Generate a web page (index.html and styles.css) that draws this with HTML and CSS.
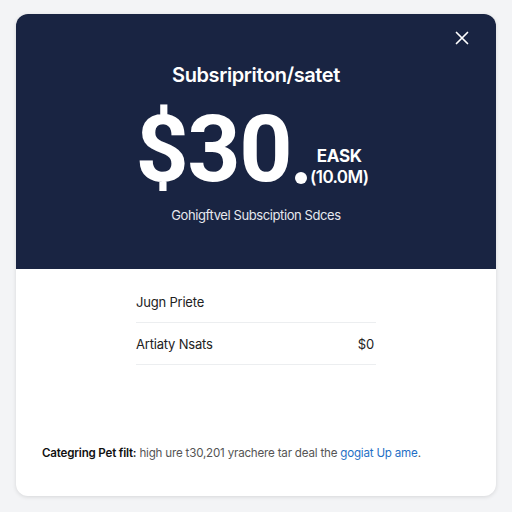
FILE: index.html
```html
<!DOCTYPE html>
<html>
<head>
<meta charset="utf-8">
<link rel="stylesheet" href="styles.css">
</head>
<body>
<div class="card">
  <header class="hero">
    <button class="close" aria-label="Close">
      <svg width="14" height="14" viewBox="0 0 14 14"><path d="M1.5 1.5L12.5 12.5M12.5 1.5L1.5 12.5" stroke="#fff" stroke-width="1.7" stroke-linecap="round"/></svg>
    </button>
    <h1 class="title">Subsripriton/satet</h1>
    <div class="price">
      <span class="amount">$30</span>
      <span class="dot"></span>
      <span class="unit"><span class="ask">EASK</span><span class="paren">(10.0M)</span></span>
    </div>
    <p class="sub">Gohigftvel Subsciption Sdces</p>
  </header>
  <section class="rows">
    <div class="row"><span>Jugn Priete</span></div>
    <div class="row"><span>Artiaty Nsats</span><span>$0</span></div>
  </section>
  <footer class="foot">
    <strong>Categring Pet filt:</strong> high ure t30,201 yrachere tar deal the <a href="#">gogiat Up ame</a>.
  </footer>
</div>
</body>
</html>
```
FILE: styles.css
```css
* { box-sizing: border-box; }
html, body { margin: 0; padding: 0; }
body {
  width: 512px;
  height: 512px;
  background: #f3f4f6;
  font-family: Inter, "Noto Sans", sans-serif;
  padding: 14px 16px 16px;
}
.card {
  width: 480px;
  height: 482px;
  background: #fff;
  border-radius: 12px;
  overflow: hidden;
  box-shadow: 0 1px 4px rgba(0,0,0,0.12);
  display: flex;
  flex-direction: column;
}
.hero {
  position: relative;
  height: 255px;
  background: #192442;
  color: #fff;
  display: flex;
  flex-direction: column;
  align-items: center;
  padding-top: 49px;
}
.close {
  position: absolute;
  top: 17px;
  right: 27px;
  background: none;
  border: 0;
  padding: 0;
  width: 14px;
  height: 14px;
}
.title {
  margin: 0;
  font-size: 20px;
  font-weight: 600;
  letter-spacing: -0.4px;
  line-height: 24px;
}
.price {
  display: flex;
  align-items: flex-end;
  margin-top: 18px;
  height: 90px;
  margin-left: -8px;
}
.amount {
  font-family: Roboto, sans-serif;
  font-size: 93px;
  font-weight: 700;
  letter-spacing: -1.5px;
  line-height: 90px;
}
.dot {
  width: 12px;
  height: 12px;
  border-radius: 50%;
  background: #fff;
  margin: 0 3px 11px 4px;
}
.unit {
  display: flex;
  flex-direction: column;
  align-items: center;
  margin-bottom: 7px;
}
.ask {
  font-size: 17px;
  font-weight: 700;
  line-height: 21px;
  letter-spacing: -0.3px;
}
.paren {
  font-size: 17px;
  font-weight: 600;
  line-height: 21px;
  letter-spacing: -0.6px;
}
.sub {
  margin: 11px 0 0;
  font-size: 13px;
  line-height: 18px;
  color: #e6e8ee;
  letter-spacing: -0.4px;
}
.rows {
  width: 240px;
  margin: 12px auto 0;
}
.row {
  display: flex;
  justify-content: space-between;
  align-items: center;
  height: 42px;
  padding: 0 2px 0 0;
  font-size: 13px;
  color: #222;
  border-bottom: 1px solid #eceef0;
  letter-spacing: -0.2px;
}
.foot {
  margin-top: auto;
  padding: 0 26px 36px;
  font-size: 11.6px;
  color: #555;
  letter-spacing: -0.2px;
  white-space: nowrap;
}
.foot strong { color: #111; font-weight: 600; }
.foot a { color: #1f6fc5; text-decoration: none; }
```
